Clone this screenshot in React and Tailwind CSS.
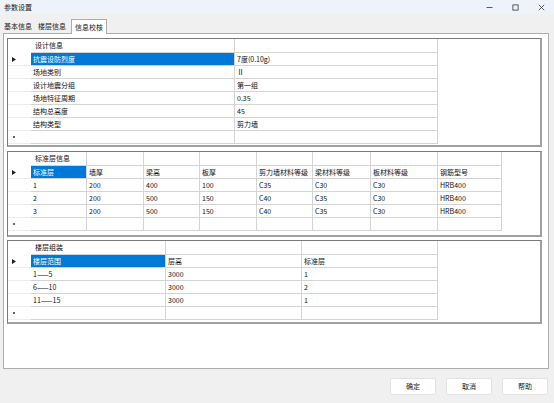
import React from 'react'

//
// ─── Données des trois grilles ─────────────────────────────────────
//

const designInfo = {
  header: ['设计信息', ''],
  widths: [204, 203],
  height: 'h-[109px]',
  rows: [
    ['抗震设防烈度', '7度(0.10g)'],
    ['场地类别', 'Ⅱ'],
    ['设计地震分组', '第一组'],
    ['场地特征周期', '0.35'],
    ['结构总高度', '45'],
    ['结构类型', '剪力墙'],
  ],
}

const layerInfo = {
  header: ['标准层信息', '', '', '', '', '', '', ''],
  widths: [56, 57, 56, 57, 56, 58, 67, 64],
  height: 'h-[86px]',
  rows: [
    ['标准层', '墙厚', '梁高', '板厚', '剪力墙材料等级', '梁材料等级', '板材料等级', '钢筋型号'],
    ['1', '200', '400', '100', 'C35', 'C30', 'C30', 'HRB400'],
    ['2', '200', '500', '150', 'C40', 'C35', 'C30', 'HRB400'],
    ['3', '200', '500', '150', 'C40', 'C35', 'C30', 'HRB400'],
  ],
}

const floorInfo = {
  header: ['楼层组装', '', ''],
  widths: [135, 136, 136],
  height: 'h-[84px]',
  rows: [
    ['楼层范围', '层高', '标准层'],
    ['1——5', '3000', '1'],
    ['6——10', '3000', '2'],
    ['11——15', '3000', '1'],
  ],
}

const font = "font-['Noto_Sans_CJK_SC','Noto_Sans',sans-serif]"

//
// ─── Grille de type DataGridView ───────────────────────────────────
//

function Grid({ header, widths, rows, height }) {
  return (
    <div
      className={`${height} w-[535px] bg-white border-t border-l border-[#7a7a7a] border-r-2 border-b-2 border-r-[#a0a0a0] border-b-[#a0a0a0]`}
    >
      {/* en-tête de colonnes */}
      <div className="flex h-[14px]">
        <div className="w-[23px] shrink-0" />
        {header.map((h, i) => (
          <div
            key={i}
            style={{ width: widths[i] }}
            className="shrink-0 flex items-center pl-[4px] border-r border-b border-[#d4d4d4] truncate"
          >
            {h}
          </div>
        ))}
      </div>

      {rows.map((r, ri) => (
        <div key={ri} className="flex h-[13px]">
          <div className="w-[23px] shrink-0 flex items-center pl-[4px] border-b border-[#ececec]">
            {ri === 0 && (
              <svg width="4" height="5" viewBox="0 0 4 5">
                <path d="M0 0L4 2.5L0 5Z" fill="#222" />
              </svg>
            )}
          </div>
          {r.map((c, ci) => (
            <div
              key={ci}
              style={{ width: widths[ci] }}
              className={`shrink-0 flex items-center pl-[2px] border-r border-b border-[#d4d4d4] whitespace-nowrap overflow-hidden ${
                ri === 0 && ci === 0 ? 'bg-[#0078d7] text-white' : ''
              }`}
            >
              {c}
            </div>
          ))}
        </div>
      ))}

      {/* ligne d'ajout */}
      <div className="flex h-[13px]">
        <div className="w-[23px] shrink-0 flex items-center pl-[5px] border-b border-[#ececec]">
          <span className="block w-[2px] h-[2px] bg-[#333] rounded-full" />
        </div>
        {widths.map((w, i) => (
          <div
            key={i}
            style={{ width: w }}
            className="shrink-0 border-r border-b border-[#d4d4d4]"
          />
        ))}
      </div>
    </div>
  )
}

function Btn({ label }) {
  return (
    <button className="w-[46px] h-[17px] bg-white border border-[#e2e2e2] rounded-[2px] flex items-center justify-center text-[7px] text-[#1a1a1a]">
      {label}
    </button>
  )
}

//
// ─── Fenêtre « 参数设置 » ──────────────────────────────────────────
//

export default function App() {
  return (
    <div className={`w-[554px] h-[403px] bg-[#f0f0f0] flex flex-col text-[7px] leading-none text-[#111] ${font}`}>
      {/* barre de titre */}
      <div className="h-[14px] bg-[#eef2f9] flex items-center justify-between pl-[4px] pr-[9px]">
        <span className="text-[7px] text-[#222]">参数设置</span>
        <div className="flex items-center gap-[19px]">
          <svg width="7" height="7" viewBox="0 0 7 7">
            <path d="M0.5 3.5H6.5" stroke="#333" strokeWidth="0.8" />
          </svg>
          <svg width="7" height="7" viewBox="0 0 7 7">
            <rect x="0.9" y="0.9" width="5.2" height="5.2" fill="none" stroke="#333" strokeWidth="0.8" />
          </svg>
          <svg width="7" height="7" viewBox="0 0 7 7">
            <path d="M0.8 0.8L6.2 6.2M6.2 0.8L0.8 6.2" stroke="#333" strokeWidth="0.8" />
          </svg>
        </div>
      </div>

      {/* onglets */}
      <div className="h-[19px] flex items-end pl-[3px] gap-[2px]">
        <div className="h-[14px] px-[1px] flex items-center text-[#222]">基本信息</div>
        <div className="h-[14px] px-[3px] flex items-center text-[#222]">楼层信息</div>
        <div className="h-[15px] px-[3px] flex items-center bg-white border border-b-0 border-[#adadad] text-[#222] -mb-px relative z-10">
          信息校核
        </div>
      </div>

      {/* panneau de l'onglet */}
      <div className="mx-[3px] w-[546px] h-[336px] bg-white border border-[#adadad] pt-[4px] pl-[3px] flex flex-col">
        <Grid {...designInfo} />
        <div className="h-[4px]" />
        <Grid {...layerInfo} />
        <div className="h-[3px]" />
        <Grid {...floorInfo} />
      </div>

      {/* boutons */}
      <div className="flex justify-end gap-[10px] pr-[6px] pt-[9px]">
        <Btn label="确定" />
        <Btn label="取消" />
        <Btn label="帮助" />
      </div>
    </div>
  )
}
